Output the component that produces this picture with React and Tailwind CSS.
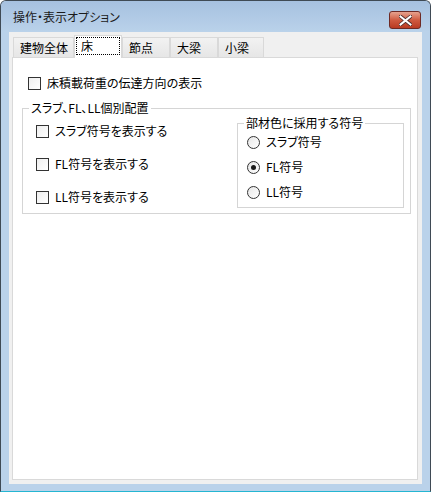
import { useState } from 'react';

const font = { fontFamily: '"Noto Sans CJK JP", "Noto Sans", sans-serif' };

function CheckBox({ label, className = '' }) {
  return (
    <div className={`flex h-[16px] items-center ${className}`}>
      <span className="h-[13px] w-[13px] shrink-0 border border-[#333333] bg-gradient-to-br from-[#eeeeee] to-white" />
      <span className="ml-[6px] text-[12px] leading-[16px] text-black">{label}</span>
    </div>
  );
}

function Radio({ label, checked }) {
  return (
    <div className="flex h-[16px] items-center">
      <span className="flex h-[13px] w-[13px] shrink-0 items-center justify-center rounded-full border border-[#333333] bg-gradient-to-br from-[#e6e6e6] to-white">
        {checked && <span className="h-[5px] w-[5px] rounded-full bg-[#1a1a1a]" />}
      </span>
      <span className="ml-[6px] text-[12px] leading-[16px] text-black">{label}</span>
    </div>
  );
}

export default function App() {
  const [tab] = useState('床');
  const tabs = [
    { name: '建物全体', w: 'w-[61px]' },
    { name: '床', w: 'w-[48px]' },
    { name: '節点', w: 'w-[48px]' },
    { name: '大梁', w: 'w-[48px]' },
    { name: '小梁', w: 'w-[46px]' },
  ];

  return (
    <div className="h-[493px] w-[431px] bg-white [font-feature-settings:'palt']" style={font}>
      {/* window frame */}
      <div className="flex h-[492px] w-[431px] flex-col rounded-t-[6px] border border-[#3f4a55] border-b-[#25b6d2] bg-[#bad2ea]">
        {/* title bar */}
        <div className="relative flex h-[31px] shrink-0 items-center rounded-t-[5px] bg-gradient-to-b from-[#a6c1e0] to-[#bad2ea] pl-[12px]">
          <span className="text-[12px] leading-[16px] text-[#1b1b1b]">操作・表示オプション</span>
          <div className="absolute left-[388px] top-[10px] flex h-[18px] w-[32px] items-center justify-center rounded-[3px] border border-[#6e2a25] bg-gradient-to-b from-[#e6a28f] via-[#cf5a40] to-[#b93a22]">
            <svg width="13" height="11" viewBox="0 0 13 11">
              <path d="M1.5 1.5 L11.5 9.5 M11.5 1.5 L1.5 9.5" stroke="#4a2a2a" strokeWidth="3.6" strokeLinecap="square" />
              <path d="M1.5 1.5 L11.5 9.5 M11.5 1.5 L1.5 9.5" stroke="#ffffff" strokeWidth="2" strokeLinecap="square" />
            </svg>
          </div>
        </div>

        {/* client area */}
        <div className="mx-[8px] flex h-[452px] flex-col bg-[#f0f0f0]">
          {/* tab strip */}
          <div className="flex h-[25px] shrink-0 items-end pl-[4px]">
            {tabs.map((t) =>
              t.name === tab ? (
                <div
                  key={t.name}
                  className={`relative z-10 -mb-[1px] flex h-[23px] ${t.w} items-start border border-b-0 border-[#d9d9d9] bg-white px-[1px] pt-[1px]`}
                >
                  <span className="flex h-[18px] w-full items-center border border-dotted border-black pl-[4px] text-[12px] leading-[16px] text-black">
                    {t.name}
                  </span>
                </div>
              ) : (
                <div
                  key={t.name}
                  className={`flex h-[20px] ${t.w} items-center border border-b-0 border-[#d9d9d9] bg-gradient-to-b from-[#f2f2f2] to-[#e6e6e6] pl-[6px] text-[12px] leading-[16px] text-black`}
                >
                  {t.name}
                </div>
              )
            )}
          </div>

          {/* tab panel */}
          <div className="ml-[3px] mr-[4px] flex h-[423px] flex-col border border-[#d9d9d9] bg-white">
            <CheckBox label="床積載荷重の伝達方向の表示" className="ml-[15px] mt-[17px]" />

            <fieldset className="ml-[9px] mt-[9px] h-[114px] w-[389px] border border-[#d5d5d5] p-0">
              <legend className="ml-[6px] px-[2px] text-[12px] leading-[16px] text-black">スラブ、FL、LL個別配置</legend>
              <div className="flex">
                <div className="ml-[13px] mt-[7px] flex flex-col gap-[17px]">
                  <CheckBox label="スラブ符号を表示する" />
                  <CheckBox label="FL符号を表示する" />
                  <CheckBox label="LL符号を表示する" />
                </div>
                <fieldset className="ml-auto mr-[6px] -mt-[1px] h-[93px] w-[167px] border border-[#d5d5d5] p-0">
                  <legend className="ml-[6px] px-[2px] text-[12px] leading-[16px] text-black">部材色に採用する符号</legend>
                  <div className="ml-[9px] mt-[3px] flex flex-col gap-[9px]">
                    <Radio label="スラブ符号" />
                    <Radio label="FL符号" checked />
                    <Radio label="LL符号" />
                  </div>
                </fieldset>
              </div>
            </fieldset>
          </div>
        </div>
      </div>
    </div>
  );
}
